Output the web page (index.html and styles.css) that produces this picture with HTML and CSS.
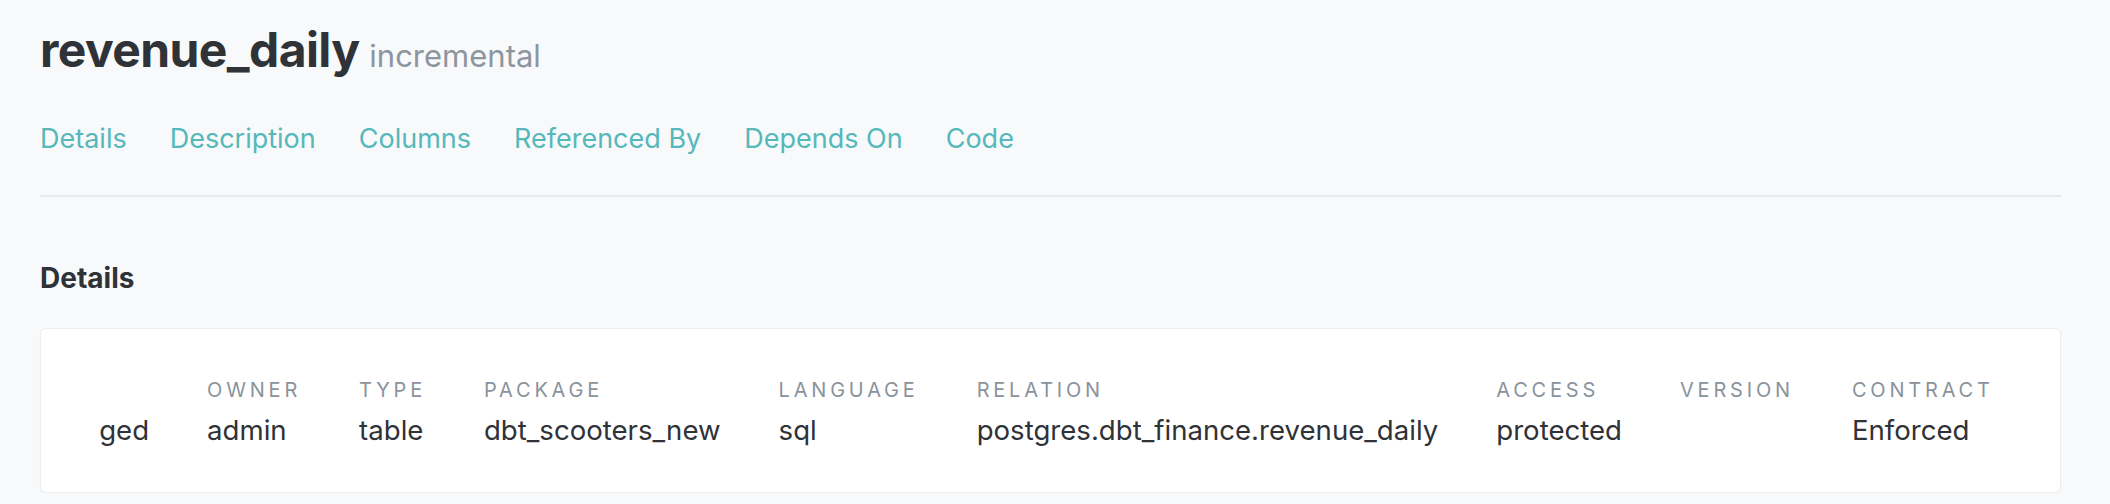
FILE: index.html
```html
<!DOCTYPE html>
<html lang="en">
<head>
<meta charset="utf-8">
<title>revenue_daily</title>
<link rel="stylesheet" href="styles.css">
</head>
<body>
<main class="page">
  <header class="model-header">
    <h1 class="model-title">revenue_daily <small class="model-kind">incremental</small></h1>
  </header>
  <nav class="tabs">
    <a class="tab">Details</a>
    <a class="tab">Description</a>
    <a class="tab">Columns</a>
    <a class="tab">Referenced By</a>
    <a class="tab">Depends On</a>
    <a class="tab">Code</a>
  </nav>
  <section class="section">
    <h2 class="section-title">Details</h2>
    <div class="card">
      <div class="scroller">
        <dl class="details-row">
          <div class="detail"><dt class="detail-label">Tags</dt><dd class="detail-value">untagged</dd></div>
          <div class="detail"><dt class="detail-label">Owner</dt><dd class="detail-value">admin</dd></div>
          <div class="detail"><dt class="detail-label">Type</dt><dd class="detail-value">table</dd></div>
          <div class="detail"><dt class="detail-label">Package</dt><dd class="detail-value">dbt_scooters_new</dd></div>
          <div class="detail"><dt class="detail-label">Language</dt><dd class="detail-value">sql</dd></div>
          <div class="detail"><dt class="detail-label">Relation</dt><dd class="detail-value">postgres.dbt_finance.revenue_daily</dd></div>
          <div class="detail"><dt class="detail-label">Access</dt><dd class="detail-value">protected</dd></div>
          <div class="detail"><dt class="detail-label">Version</dt><dd class="detail-value"></dd></div>
          <div class="detail"><dt class="detail-label">Contract</dt><dd class="detail-value">Enforced</dd></div>
        </dl>
      </div>
    </div>
  </section>
</main>
</body>
</html>
```

FILE: styles.css
```css
* { box-sizing: border-box; }

html, body {
  margin: 0;
  padding: 0;
  background: #f8f9fb;
}

body {
  font-family: Inter, "Noto Sans", "Liberation Sans", sans-serif;
  color: #2f3237;
}

.page {
  padding: 22px 49px 0 40px;
}

.model-header {
  margin: 0;
}

.model-title {
  margin: 0;
  font-size: 48px;
  line-height: 56px;
  font-weight: 700;
  letter-spacing: -0.6px;
  color: #2f3237;
}

.model-kind {
  font-size: 31px;
  font-weight: 400;
  letter-spacing: 0;
  color: #8d959e;
  margin-left: -1px;
}

.tabs {
  display: flex;
  gap: 43px;
  margin-top: 38px;
  padding-bottom: 39px;
  border-bottom: 2px solid #e7e9ec;
}

.tab {
  font-size: 27px;
  line-height: 34px;
  color: #55b8ba;
  text-decoration: none;
}

.section {
  margin-top: 64px;
}

.section-title {
  margin: 0;
  font-size: 28px;
  line-height: 34px;
  font-weight: 700;
  color: #2f3237;
}

.card {
  margin-top: 33px;
  background: #ffffff;
  border: 1px solid #eceef1;
  border-radius: 6px;
  padding: 49px 0 45px 58px;
  box-shadow: 0 1px 2px rgba(20, 30, 40, 0.04);
}

.scroller {
  overflow: hidden;
}

.details-row {
  display: flex;
  gap: 58px;
  margin: 0 0 0 -74px;
}

.detail {
  display: flex;
  flex-direction: column;
  flex: none;
}

.detail-label {
  margin: 0;
  font-size: 20px;
  line-height: 24px;
  text-transform: uppercase;
  letter-spacing: 3.8px;
  color: #8a939c;
}

.detail-value {
  margin: 11px 0 0 0;
  font-size: 27.6px;
  line-height: 34px;
  color: #2f3237;
  min-height: 34px;
  white-space: nowrap;
}
```
